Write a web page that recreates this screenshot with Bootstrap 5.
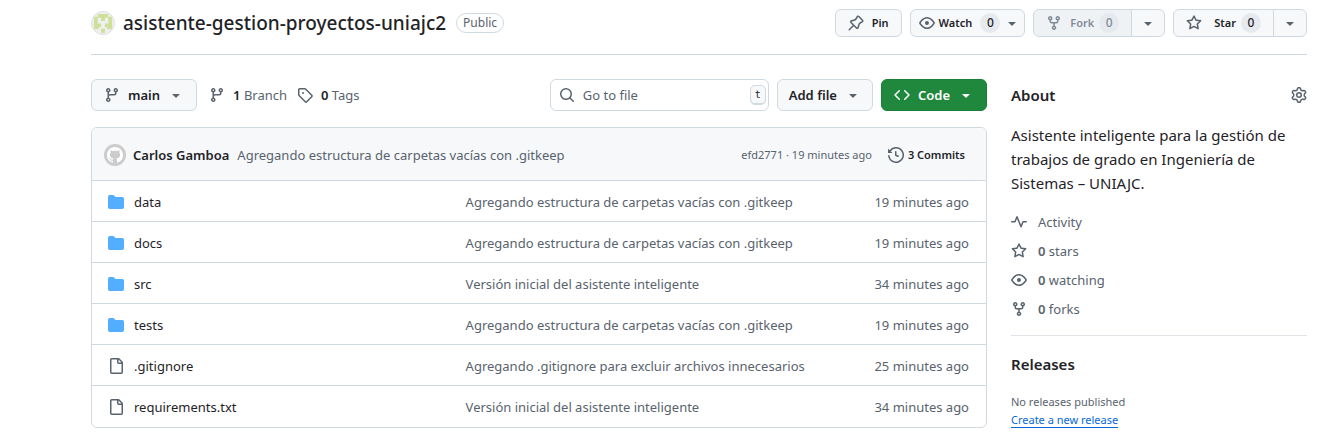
<!DOCTYPE html>
<html lang="es">
<head>
<meta charset="utf-8">
<meta name="viewport" content="width=device-width, initial-scale=1">
<title>asistente-gestion-proyectos-uniajc2</title>
<link href="https://cdn.jsdelivr.net/npm/bootstrap@5.3.0/dist/css/bootstrap.min.css" rel="stylesheet">
<style>
  :root { --fg: #1f2328; --muted-fg: #59636e; --line: #d1d9e0; --soft: #f6f8fa; }
  body { font-family: "Noto Sans", "Liberation Sans", sans-serif; font-size: 13px; line-height: 20px; color: var(--fg); background: #fff; }
  a { color: inherit; text-decoration: none; }
  .fw-semibold { font-weight: 600; }
  .page { padding: 0 36px 0 91px; }
  .oct { width: 16px; height: 16px; fill: currentColor; flex: none; display: block; }
  .dim { color: var(--muted-fg); }
  .repo-head { height: 55px; padding-bottom: 9px; border-bottom: 1px solid var(--line); }
  .repo-title { font-size: 19px; line-height: 30px; font-weight: 500; margin: 0 10px 0 8px; }
  .pill { font-size: 12px; line-height: 18px; border: 1px solid var(--line); border-radius: 20px; padding: 0 6px; }
  .btn { --bs-btn-font-size: 13px; --bs-btn-line-height: 20px; --bs-btn-font-weight: 600; --bs-btn-border-radius: 6px; --bs-btn-padding-y: 5px; --bs-btn-padding-x: 12px;
    --bs-btn-color: var(--fg); --bs-btn-bg: var(--soft); --bs-btn-border-color: var(--line); --bs-btn-hover-bg: #eff2f5; --bs-btn-hover-border-color: var(--line);
    display: inline-flex; align-items: center; height: 32px; }
  .btn .oct { color: var(--muted-fg); }
  .btn-sm { --bs-btn-font-size: 11px; height: 28px; --bs-btn-padding-y: 3px; --bs-btn-border-radius: 6px; }
  .btn-sm:disabled { color: #818b98; background: #eff2f5; border-color: var(--line); opacity: 1; }
  .btn-sm:disabled .oct { color: #818b98; }
  .btn-add { --bs-btn-padding-x: 11px; }
  .btn-clone { --bs-btn-color: #fff; --bs-btn-bg: #1f883d; --bs-btn-border-color: #1a7f37; --bs-btn-hover-bg: #1c8139; --bs-btn-hover-color: #fff; }
  .btn-clone .oct { color: #fff; }
  .count { width: 20px; line-height: 20px; border-radius: 20px; background: #e6eaef; text-align: center; font-size: 12px; font-weight: 500; }
  .btn-group .count { margin-left: 5px; }
  .finder { width: 219px; height: 32px; border: 1px solid var(--line); border-radius: 6px; padding: 0 2px 0 8px; }
  .finder input { font-size: 13px; line-height: 20px; padding: 0; color: var(--fg); box-shadow: none; }
  .finder input::placeholder { color: var(--muted-fg); }
  .keycap { width: 16px; flex: none; text-align: center; font: 10px/18px "DejaVu Sans Mono", monospace; color: var(--fg); background: var(--soft); border: 1px solid var(--line); border-radius: 5px; padding: 0; box-shadow: inset 0 -1px 0 var(--line); }
  .refs { margin-left: 12px; gap: 10px; }
  .files-col { flex: 1 1 0; min-width: 0; }
  .about-col { flex: 0 0 296px; }
  .files-card { border: 1px solid var(--line); border-radius: 6px; overflow: hidden; }
  .files-head { height: 52px; background: var(--soft); padding: 1px 21px 0 12px; }
  .author { font-weight: 600; margin: 0 8px 0 7px; }
  .files-table { --bs-table-color: var(--fg); table-layout: fixed; margin: 0; }
  .files-table > tbody > tr > * { height: 41px; padding: 1px 17px 0 16px; border: 0; border-top: 1px solid var(--line); vertical-align: middle; }
  .files-table > tbody > tr > th { font-weight: 400; width: 40%; }
  .files-table > tbody > tr > td.dim { color: var(--muted-fg); }
  .files-table a { gap: 10px; }
  .files-table .when { width: 150px; text-align: right; }
  .folder { color: #54aeff; }
  .meta-text { font-size: 11px; line-height: 18px; }
  h2 { font-size: 15px; line-height: 24px; font-weight: 600; margin: 0; }
  .about-head { height: 32px; }
  .blurb { font-size: 15px; line-height: 24px; margin: 12px 0 17px; }
  .facts { display: grid; gap: 9px; }
  .facts a { gap: 11px; }
  .rule { border-top: 1px solid #dfe3e8; margin: 16px 0; }
  .releases { margin-bottom: 17px; }
  .new-link { color: #0969da; border-bottom: 1px solid; }
</style>
</head>
<body>
<svg class="d-none" aria-hidden="true">
  <symbol id="branch" viewBox="0 0 16 16"><path d="M9.5 3.25a2.25 2.25 0 1 1 3 2.122V6A2.5 2.5 0 0 1 10 8.5H6a1 1 0 0 0-1 1v1.128a2.251 2.251 0 1 1-1.5 0V5.372a2.25 2.25 0 1 1 1.5 0v1.836A2.493 2.493 0 0 1 6 7h4a1 1 0 0 0 1-1v-.628A2.25 2.25 0 0 1 9.5 3.25Zm-6 0a.75.75 0 1 0 1.5 0 .75.75 0 0 0-1.5 0Zm8.25-.75a.75.75 0 1 0 0 1.5.75.75 0 0 0 0-1.5ZM4.25 12a.75.75 0 1 0 0 1.5.75.75 0 0 0 0-1.5Z"/></symbol>
  <symbol id="tag" viewBox="0 0 16 16"><path d="M1 7.775V2.75C1 1.784 1.784 1 2.75 1h5.025c.464 0 .91.184 1.238.513l6.25 6.25a1.75 1.75 0 0 1 0 2.474l-5.026 5.026a1.75 1.75 0 0 1-2.474 0l-6.25-6.25A1.752 1.752 0 0 1 1 7.775Zm1.5 0c0 .066.026.13.073.177l6.25 6.25a.25.25 0 0 0 .354 0l5.025-5.025a.25.25 0 0 0 0-.354l-6.25-6.25a.25.25 0 0 0-.177-.073H2.75a.25.25 0 0 0-.25.25ZM6 5a1 1 0 1 1 0 2 1 1 0 0 1 0-2Z"/></symbol>
  <symbol id="eye" viewBox="0 0 16 16"><path d="M8 2c1.981 0 3.671.992 4.933 2.078 1.27 1.091 2.187 2.345 2.637 3.023a1.62 1.62 0 0 1 0 1.798c-.45.678-1.367 1.932-2.637 3.023C11.67 13.008 9.981 14 8 14c-1.981 0-3.671-.992-4.933-2.078C1.797 10.83.88 9.576.43 8.898a1.62 1.62 0 0 1 0-1.798c.45-.677 1.367-1.931 2.637-3.022C4.33 2.992 6.019 2 8 2ZM1.679 7.932a.12.12 0 0 0 0 .136c.411.622 1.241 1.75 2.366 2.717C5.176 11.758 6.527 12.5 8 12.5c1.473 0 2.825-.742 3.955-1.715 1.124-.967 1.954-2.096 2.366-2.717a.12.12 0 0 0 0-.136c-.412-.621-1.242-1.75-2.366-2.717C10.824 4.242 9.473 3.5 8 3.5c-1.473 0-2.825.742-3.955 1.715-1.124.967-1.954 2.096-2.366 2.717ZM8 10a2 2 0 1 1-.001-3.999A2 2 0 0 1 8 10Z"/></symbol>
  <symbol id="fork" viewBox="0 0 16 16"><path d="M5 5.372v.878c0 .414.336.75.75.75h4.5a.75.75 0 0 0 .75-.75v-.878a2.25 2.25 0 1 1 1.5 0v.878a2.25 2.25 0 0 1-2.25 2.25h-1.5v2.128a2.251 2.251 0 1 1-1.5 0V8.5h-1.5A2.25 2.25 0 0 1 3.5 6.25v-.878a2.25 2.25 0 1 1 1.5 0ZM5 3.25a.75.75 0 1 0-1.5 0 .75.75 0 0 0 1.5 0Zm6.75.75a.75.75 0 1 0 0-1.5.75.75 0 0 0 0 1.5Zm-3 8.75a.75.75 0 1 0-1.5 0 .75.75 0 0 0 1.5 0Z"/></symbol>
  <symbol id="star" viewBox="0 0 16 16"><path d="M8 .25a.75.75 0 0 1 .673.418l1.882 3.815 4.21.612a.75.75 0 0 1 .416 1.279l-3.046 2.97.719 4.192a.751.751 0 0 1-1.088.791L8 12.347l-3.766 1.98a.75.75 0 0 1-1.088-.79l.72-4.194L.818 6.374a.75.75 0 0 1 .416-1.28l4.21-.611L7.327.668A.75.75 0 0 1 8 .25Zm0 2.445L6.615 5.5a.75.75 0 0 1-.564.41l-3.097.45 2.24 2.184a.75.75 0 0 1 .216.664l-.528 3.084 2.769-1.456a.75.75 0 0 1 .698 0l2.77 1.456-.53-3.084a.75.75 0 0 1 .216-.664l2.24-2.183-3.096-.45a.75.75 0 0 1-.564-.41L8 2.694Z"/></symbol>
  <symbol id="pin" viewBox="0 0 16 16"><path d="m11.294.984 3.722 3.722a1.75 1.75 0 0 1-.504 2.826l-1.327.613a3.089 3.089 0 0 0-1.707 2.084l-.584 2.454c-.317 1.332-1.972 1.8-2.94.832L5.75 11.311 1.78 15.28a.749.749 0 1 1-1.06-1.06l3.969-3.97-2.204-2.204c-.968-.968-.5-2.623.832-2.94l2.454-.584a3.08 3.08 0 0 0 2.084-1.707l.613-1.327a1.75 1.75 0 0 1 2.826-.504ZM6.283 9.723l2.732 2.731a.25.25 0 0 0 .42-.119l.584-2.454a4.586 4.586 0 0 1 2.537-3.098l1.328-.613a.25.25 0 0 0 .072-.404l-3.722-3.722a.25.25 0 0 0-.404.072l-.613 1.328a4.584 4.584 0 0 1-3.098 2.537l-2.454.584a.25.25 0 0 0-.119.42l2.731 2.732Z"/></symbol>
  <symbol id="caret" viewBox="0 0 16 16"><path d="m4.427 7.427 3.396 3.396a.25.25 0 0 0 .354 0l3.396-3.396A.25.25 0 0 0 11.396 7H4.604a.25.25 0 0 0-.177.427Z"/></symbol>
  <symbol id="search" viewBox="0 0 16 16"><path d="M10.68 11.74a6 6 0 0 1-7.922-8.982 6 6 0 0 1 8.982 7.922l3.04 3.04a.749.749 0 1 1-1.06 1.06ZM11.5 7a4.499 4.499 0 1 0-8.997 0A4.499 4.499 0 0 0 11.5 7Z"/></symbol>
  <symbol id="code" viewBox="0 0 16 16"><path d="m11.28 3.22 4.25 4.25a.75.75 0 0 1 0 1.06l-4.25 4.25a.749.749 0 1 1-1.06-1.06L13.94 8l-3.72-3.72a.749.749 0 1 1 1.06-1.06Zm-6.56 0a.751.751 0 0 1 1.06 1.06L2.06 8l3.72 3.72a.749.749 0 1 1-1.06 1.06L.47 8.53a.75.75 0 0 1 0-1.06Z"/></symbol>
  <symbol id="history" viewBox="0 0 16 16"><path d="m.427 1.927 1.215 1.215a8.002 8.002 0 1 1-1.6 5.685.75.75 0 1 1 1.493-.154 6.5 6.5 0 1 0 1.18-4.458l1.358 1.358A.25.25 0 0 1 3.896 6H.25A.25.25 0 0 1 0 5.75V2.104a.25.25 0 0 1 .427-.177ZM7.75 4a.75.75 0 0 1 .75.75v2.992l2.028.812a.75.75 0 0 1-.557 1.392l-2.5-1A.751.751 0 0 1 7 8.25v-3.5A.75.75 0 0 1 7.75 4Z"/></symbol>
  <symbol id="folder" viewBox="0 0 16 16"><path d="M1.75 1A1.75 1.75 0 0 0 0 2.75v10.5C0 14.216.784 15 1.75 15h12.5A1.75 1.75 0 0 0 16 13.25v-8.5A1.75 1.75 0 0 0 14.25 3H7.5a.25.25 0 0 1-.2-.1l-.9-1.2C6.07 1.26 5.55 1 5 1H1.75Z"/></symbol>
  <symbol id="file" viewBox="0 0 16 16"><path d="M2 1.75C2 .784 2.784 0 3.75 0h6.586c.464 0 .909.184 1.237.513l2.914 2.914c.329.328.513.773.513 1.237v9.586A1.75 1.75 0 0 1 13.25 16h-9.5A1.75 1.75 0 0 1 2 14.25Zm1.75-.25a.25.25 0 0 0-.25.25v12.5c0 .138.112.25.25.25h9.5a.25.25 0 0 0 .25-.25V6h-2.75A1.75 1.75 0 0 1 9 4.25V1.5Zm6.75.062V4.25c0 .138.112.25.25.25h2.688l-.011-.013-2.914-2.914-.013-.011Z"/></symbol>
  <symbol id="pulse" viewBox="0 0 16 16"><path d="M6 2c.306 0 .582.187.696.471L10 10.731l1.304-3.26A.751.751 0 0 1 12 7h3.25a.75.75 0 0 1 0 1.5h-2.742l-1.812 4.528a.751.751 0 0 1-1.392 0L6 4.77 4.696 8.03A.75.75 0 0 1 4 8.5H.75a.75.75 0 0 1 0-1.5h2.742l1.812-4.529A.751.751 0 0 1 6 2Z"/></symbol>
  <symbol id="gear" viewBox="0 0 16 16"><path d="M8 0a8.2 8.2 0 0 1 .701.031C9.444.095 9.99.645 10.16 1.29l.288 1.107c.018.066.079.158.212.224.231.114.454.243.668.386.123.082.233.09.299.071l1.103-.303c.644-.176 1.392.021 1.82.63.27.385.506.792.704 1.218.315.675.111 1.422-.364 1.891l-.814.806c-.049.048-.098.147-.088.294.016.257.016.515 0 .772-.01.147.038.246.088.294l.814.806c.475.469.679 1.216.364 1.891a7.977 7.977 0 0 1-.704 1.217c-.428.61-1.176.807-1.82.63l-1.102-.302c-.067-.019-.177-.011-.3.071a5.909 5.909 0 0 1-.668.386c-.133.066-.194.158-.211.224l-.29 1.106c-.168.646-.715 1.196-1.458 1.26a8.006 8.006 0 0 1-1.402 0c-.743-.064-1.289-.614-1.458-1.26l-.289-1.106c-.018-.066-.079-.158-.212-.224a5.738 5.738 0 0 1-.668-.386c-.123-.082-.233-.09-.299-.071l-1.103.303c-.644.176-1.392-.021-1.82-.63a8.12 8.12 0 0 1-.704-1.218c-.315-.675-.111-1.422.363-1.891l.815-.806c.05-.048.098-.147.088-.294a6.214 6.214 0 0 1 0-.772c.01-.147-.038-.246-.088-.294l-.815-.806C.635 6.045.431 5.298.746 4.623a7.92 7.92 0 0 1 .704-1.217c.428-.61 1.176-.807 1.82-.63l1.102.302c.067.019.177.011.3-.071.214-.143.437-.272.668-.386.133-.066.194-.158.211-.224l.29-1.106C6.009.645 6.556.095 7.299.03 7.53.01 7.764 0 8 0Zm-.571 1.525c-.036.003-.108.036-.137.146l-.289 1.105c-.147.561-.549.967-.998 1.189-.173.086-.34.183-.5.29-.417.278-.97.423-1.529.27l-1.103-.303c-.109-.03-.175.016-.195.045-.22.312-.412.644-.573.99-.014.031-.021.11.059.19l.815.806c.411.406.562.957.53 1.456a4.709 4.709 0 0 0 0 .582c.032.499-.119 1.05-.53 1.456l-.815.806c-.081.08-.073.159-.059.19.162.346.353.677.573.989.02.03.085.076.195.046l1.102-.303c.56-.153 1.113-.008 1.53.27.161.107.328.204.501.29.447.222.85.629.997 1.189l.289 1.105c.029.109.101.143.137.146a6.6 6.6 0 0 0 1.142 0c.036-.003.108-.036.137-.146l.289-1.105c.147-.561.549-.967.998-1.189.173-.086.34-.183.5-.29.417-.278.97-.423 1.529-.27l1.103.303c.109.029.175-.016.195-.045.22-.313.411-.644.573-.99.014-.031.021-.11-.059-.19l-.815-.806c-.411-.406-.562-.957-.53-1.456a4.709 4.709 0 0 0 0-.582c-.032-.499.119-1.05.53-1.456l.815-.806c.081-.08.073-.159.059-.19a6.464 6.464 0 0 0-.573-.989c-.02-.03-.085-.076-.195-.046l-1.102.303c-.56.153-1.113.008-1.53-.27a4.44 4.44 0 0 0-.501-.29c-.447-.222-.85-.629-.997-1.189l-.289-1.105c-.029-.11-.101-.143-.137-.146a6.6 6.6 0 0 0-1.142 0ZM11 8a3 3 0 1 1-6 0 3 3 0 0 1 6 0ZM9.5 8a1.5 1.5 0 1 0-3.001.001A1.5 1.5 0 0 0 9.5 8Z"/></symbol>
</svg>

<div class="page">
  <header class="repo-head d-flex align-items-center justify-content-between">
    <div class="d-flex align-items-center">
      <svg width="24" height="24" viewBox="0 0 25 25" aria-hidden="true"><circle cx="12.5" cy="12.5" r="12" fill="#f0f0f0" stroke="#dcdfe2"/><path fill="#cfe09b" d="M7 3h11v3h4v13h-5v-2h-2.500v2h-4v-2H8v2H3V6h4zM10.500 19h4v4h-4z"/><path fill="#f0f0f0" d="M7 7h3.500v3.500h4V7H18v6h-3.500v5.500h-4V13H7z"/></svg>
      <h1 class="repo-title"><a href="#">asistente-gestion-proyectos-uniajc2</a></h1>
      <span class="pill dim">Public</span>
    </div>
    <div class="d-flex gap-2">
      <button class="btn btn-sm" type="button"><svg class="oct me-2"><use href="#pin"/></svg>Pin</button>
      <button class="btn btn-sm ps-2 pe-1" type="button"><svg class="oct me-1"><use href="#eye"/></svg>Watch<span class="count ms-2 me-1">0</span><svg class="oct"><use href="#caret"/></svg></button>
      <div class="btn-group">
        <button class="btn btn-sm" type="button" disabled><svg class="oct me-2"><use href="#fork"/></svg>Fork<span class="count">0</span></button>
        <button class="btn btn-sm px-2" type="button" aria-label="Forks"><svg class="oct"><use href="#caret"/></svg></button>
      </div>
      <div class="btn-group">
        <button class="btn btn-sm" type="button"><svg class="oct me-2"><use href="#star"/></svg><span class="ms-1">Star</span><span class="count">0</span></button>
        <button class="btn btn-sm px-2" type="button" aria-label="Lists"><svg class="oct"><use href="#caret"/></svg></button>
      </div>
    </div>
  </header>

  <div class="d-flex gap-4 pt-4">
    <main class="files-col">
      <div class="d-flex align-items-center mb-3">
        <button class="btn" type="button"><svg class="oct me-2"><use href="#branch"/></svg>main<svg class="oct ms-2"><use href="#caret"/></svg></button>
        <div class="refs d-flex">
          <a href="#" class="d-flex align-items-center dim"><svg class="oct me-2"><use href="#branch"/></svg><span><b class="fw-semibold text-dark">1</b> Branch</span></a>
          <a href="#" class="d-flex align-items-center dim"><svg class="oct me-2"><use href="#tag"/></svg><span><b class="fw-semibold text-dark">0</b> Tags</span></a>
        </div>
        <div class="d-flex gap-2 ms-auto">
          <label class="finder d-flex align-items-center dim"><svg class="oct me-2"><use href="#search"/></svg><input class="form-control border-0" type="text" placeholder="Go to file" aria-label="Go to file"><kbd class="keycap">t</kbd></label>
          <button class="btn btn-add" type="button">Add file<svg class="oct ms-2"><use href="#caret"/></svg></button>
          <button class="btn btn-clone" type="button"><svg class="oct me-2"><use href="#code"/></svg>Code<svg class="oct ms-2"><use href="#caret"/></svg></button>
        </div>
      </div>

      <div class="files-card">
        <div class="files-head d-flex align-items-center">
          <svg width="22" height="22" viewBox="0 0 22 22" aria-hidden="true"><circle cx="11" cy="11" r="11" fill="#cccccc"/><path transform="translate(3 3)" fill="#fff" d="M8 0c4.42 0 8 3.58 8 8a8.013 8.013 0 0 1-5.45 7.59c-.4.08-.55-.17-.55-.38 0-.27.01-1.13.01-2.2 0-.75-.25-1.23-.54-1.48 1.78-.2 3.65-.88 3.65-3.95 0-.88-.31-1.59-.82-2.15.08-.2.36-1.02-.08-2.12 0 0-.67-.22-2.2.82-.64-.18-1.32-.27-2-.27-.68 0-1.36.09-2 .27-1.53-1.03-2.2-.82-2.2-.82-.44 1.1-.16 1.92-.08 2.12-.51.56-.82 1.28-.82 2.15 0 3.06 1.86 3.75 3.64 3.95-.23.2-.44.55-.51 1.07-.46.21-1.61.55-2.33-.66-.15-.24-.6-.83-1.23-.82-.67.01-.27.38.01.53.34.19.73.9.82 1.13.16.45.68 1.31 2.69.94 0 .67.01 1.3.01 1.49 0 .21-.15.45-.55.38A7.995 7.995 0 0 1 0 8c0-4.42 3.58-8 8-8Z"/></svg>
          <span class="author">Carlos Gamboa</span>
          <a href="#" class="dim">Agregando estructura de carpetas vacías con .gitkeep</a>
          <span class="meta-text dim ms-auto">efd2771 · 19 minutes ago</span>
          <a href="#" class="d-flex align-items-center meta-text fw-semibold ms-3"><svg class="oct dim me-1"><use href="#history"/></svg>3 Commits</a>
        </div>
        <table class="table files-table">
          <tbody>
            <tr><th scope="row"><a href="#" class="d-flex align-items-center"><svg class="oct folder"><use href="#folder"/></svg>data</a></th><td class="dim">Agregando estructura de carpetas vacías con .gitkeep</td><td class="dim when">19 minutes ago</td></tr>
            <tr><th scope="row"><a href="#" class="d-flex align-items-center"><svg class="oct folder"><use href="#folder"/></svg>docs</a></th><td class="dim">Agregando estructura de carpetas vacías con .gitkeep</td><td class="dim when">19 minutes ago</td></tr>
            <tr><th scope="row"><a href="#" class="d-flex align-items-center"><svg class="oct folder"><use href="#folder"/></svg>src</a></th><td class="dim">Versión inicial del asistente inteligente</td><td class="dim when">34 minutes ago</td></tr>
            <tr><th scope="row"><a href="#" class="d-flex align-items-center"><svg class="oct folder"><use href="#folder"/></svg>tests</a></th><td class="dim">Agregando estructura de carpetas vacías con .gitkeep</td><td class="dim when">19 minutes ago</td></tr>
            <tr><th scope="row"><a href="#" class="d-flex align-items-center"><svg class="oct dim"><use href="#file"/></svg>.gitignore</a></th><td class="dim">Agregando .gitignore para excluir archivos innecesarios</td><td class="dim when">25 minutes ago</td></tr>
            <tr><th scope="row"><a href="#" class="d-flex align-items-center"><svg class="oct dim"><use href="#file"/></svg>requirements.txt</a></th><td class="dim">Versión inicial del asistente inteligente</td><td class="dim when">34 minutes ago</td></tr>
          </tbody>
        </table>
      </div>
    </main>

    <aside class="about-col">
      <div class="d-flex align-items-center justify-content-between about-head">
        <h2>About</h2>
        <a href="#" class="dim" aria-label="Edit repository details"><svg class="oct"><use href="#gear"/></svg></a>
      </div>
      <p class="blurb">Asistente inteligente para la gestión de trabajos de grado en Ingeniería de Sistemas – UNIAJC.</p>
      <div class="facts dim">
        <a href="#" class="d-flex align-items-center"><svg class="oct"><use href="#pulse"/></svg>Activity</a>
        <a href="#" class="d-flex align-items-center"><svg class="oct"><use href="#star"/></svg><span><b class="fw-semibold">0</b> stars</span></a>
        <a href="#" class="d-flex align-items-center"><svg class="oct"><use href="#eye"/></svg><span><b class="fw-semibold">0</b> watching</span></a>
        <a href="#" class="d-flex align-items-center"><svg class="oct"><use href="#fork"/></svg><span><b class="fw-semibold">0</b> forks</span></a>
      </div>
      <div class="rule"></div>
      <h2 class="releases">Releases</h2>
      <div class="meta-text dim">No releases published</div>
      <div class="meta-text"><a href="#" class="new-link">Create a new release</a></div>
    </aside>
  </div>
</div>
<script src="https://cdn.jsdelivr.net/npm/bootstrap@5.3.0/dist/js/bootstrap.bundle.min.js"></script>
</body>
</html>
